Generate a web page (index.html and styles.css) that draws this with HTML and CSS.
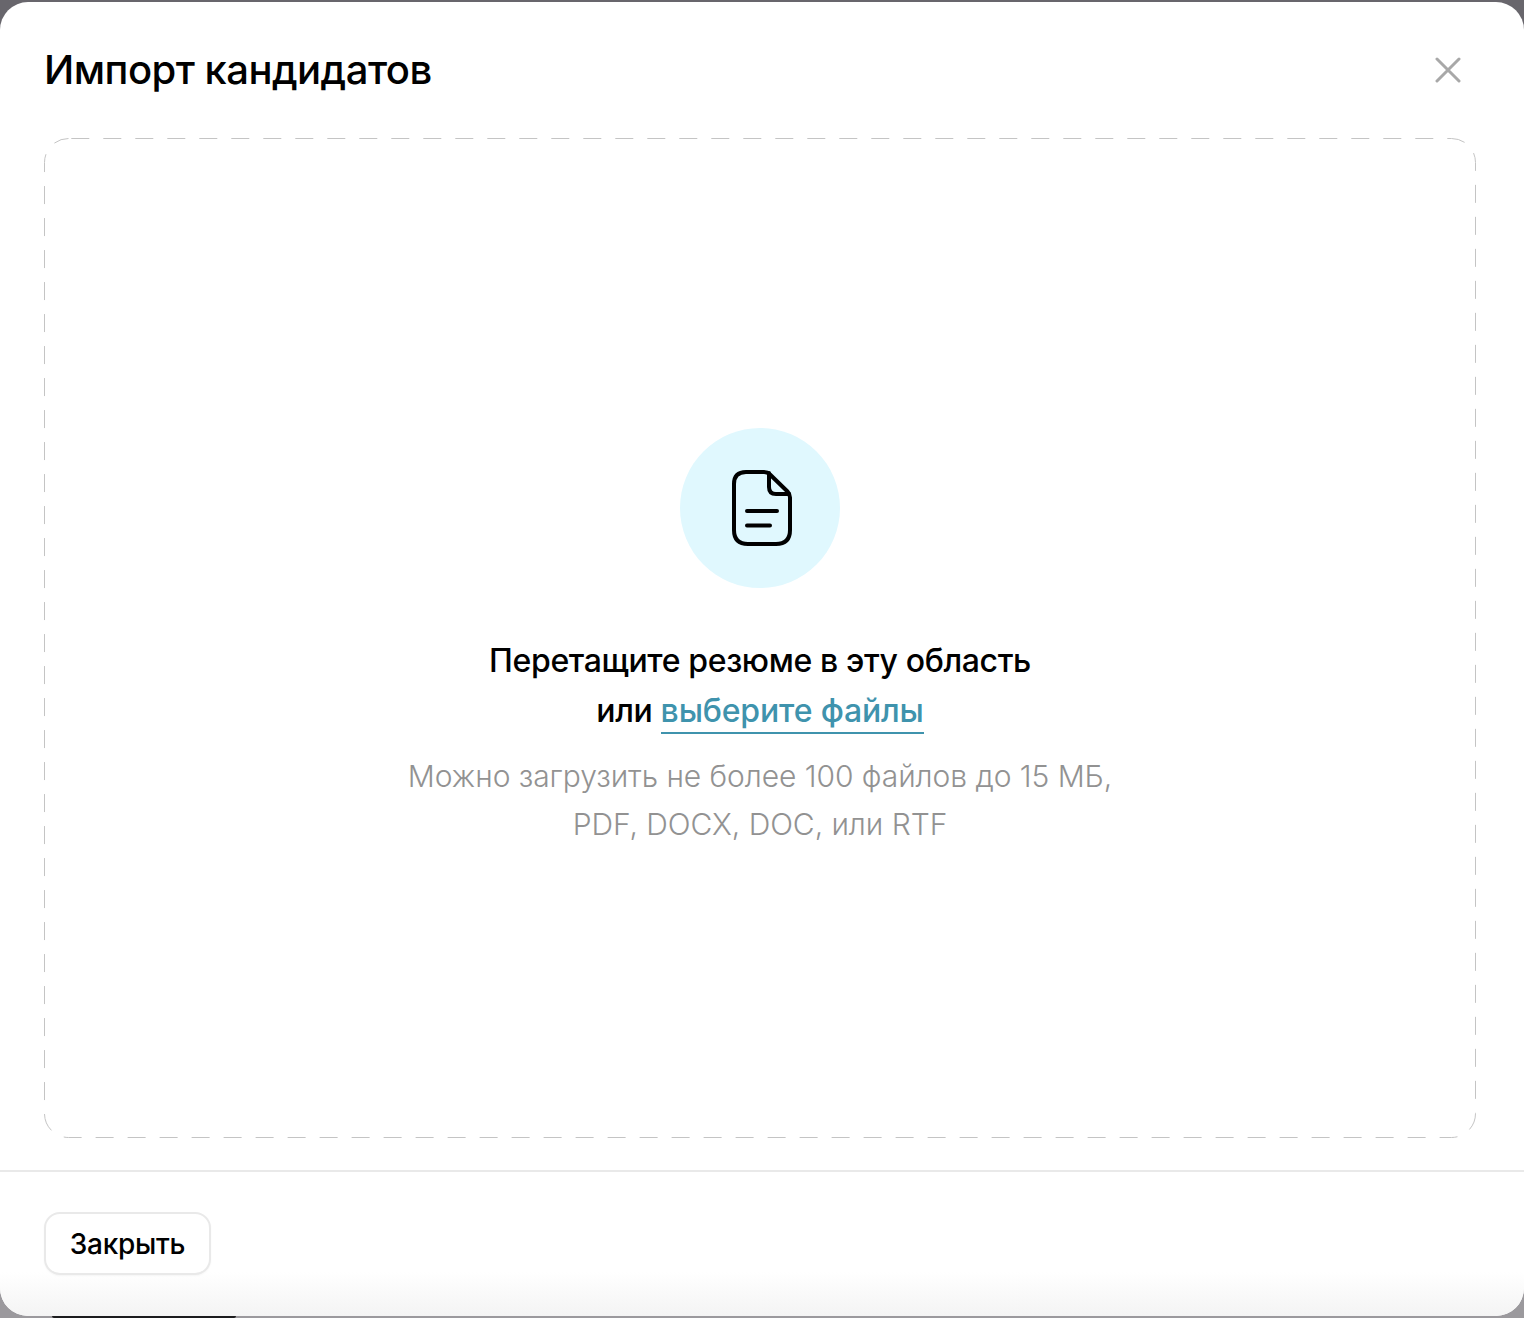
FILE: index.html
```html
<!DOCTYPE html>
<html lang="ru">
<head>
<meta charset="utf-8">
<title>Импорт кандидатов</title>
<link rel="stylesheet" href="styles.css">
</head>
<body>
<div class="modal">
  <header class="modal-head">
    <h1 class="title">Импорт кандидатов</h1>
    <button class="close" aria-label="Закрыть">
      <svg class="close-icon" viewBox="0 0 26 26"><path d="M2 2 24 24M24 2 2 24"/></svg>
    </button>
  </header>
  <section class="drop">
    <svg class="drop-border" width="1432" height="1000" viewBox="0 0 1432 1000"><rect x="0.5" y="0.5" width="1431" height="999" rx="24" ry="24"/></svg>
    <div class="file-circle">
      <svg class="file-icon" viewBox="0 0 60 76"><path d="M14 2H32Q35.500 2 38 4.500L55.500 21.500Q58 24 58 27.500V60Q58 74 44 74H16Q2 74 2 60V14Q2 2 14 2Z"/><path d="M37 3V17Q37 24 44 24H57"/><path d="M15 41H45M15 55.500H38"/></svg>
    </div>
    <p class="lead">Перетащите резюме в эту область<br>или <a class="link" href="#">выберите файлы</a></p>
    <p class="hint">Можно загрузить не более 100 файлов до 15 МБ,<br>PDF, DOCX, DOC, или RTF</p>
  </section>
  <footer class="modal-foot">
    <button class="btn">Закрыть</button>
  </footer>
</div>
<div class="peek"></div>
</body>
</html>
```
FILE: styles.css
```css
* { box-sizing: border-box; }
html, body { margin: 0; padding: 0; }
body {
  width: 1524px;
  height: 1318px;
  overflow: hidden;
  padding-top: 2px;
  background: linear-gradient(180deg, #68666c 0, #68666c 60px, #9b999d 1260px);
  font-family: Inter, "Noto Sans", sans-serif;
  color: #000;
}
.modal {
  height: 1314px;
  border-radius: 28px;
  background: #fff;
  display: flex;
  flex-direction: column;
}
.modal-head {
  display: flex;
  justify-content: space-between;
  align-items: center;
  height: 136px;
  padding: 0 63px 0 44px;
}
.title {
  margin: 0;
  font-size: 40px;
  line-height: 48px;
  font-weight: 500;
  letter-spacing: -0.53px;
}
.close {
  padding: 0;
  border: 0;
  background: none;
  width: 26px;
  height: 26px;
  display: flex;
}
.close-icon { width: 26px; height: 26px; fill: none; stroke: #a8a8a8; stroke-width: 3; stroke-linecap: round; }
.drop {
  position: relative;
  margin: 0 48px 0 44px;
  height: 1000px;
  display: flex;
  flex-direction: column;
  align-items: center;
  padding-top: 290px;
}
.drop-border { position: absolute; left: 0; top: 0; fill: none; stroke: #c4c4c4; stroke-width: 1; stroke-dasharray: 18 14; stroke-dashoffset: -2.8; }
.file-circle {
  width: 160px;
  height: 160px;
  border-radius: 50%;
  background: #e0f8fe;
  display: flex;
  align-items: center;
  justify-content: center;
}
.file-icon { width: 60px; height: 76px; margin-left: 4px; fill: none; stroke: #000; stroke-width: 4; stroke-linecap: round; stroke-linejoin: round; }
.lead {
  margin: 48px 0 0;
  font-size: 32px;
  line-height: 50px;
  font-weight: 500;
  letter-spacing: -0.37px;
  text-align: center;
}
.link {
  color: #3f93ad;
  letter-spacing: -0.17px;
  text-decoration: none;
  padding-bottom: 2px;
  border-bottom: 2px solid #3f93ad;
}
.hint {
  margin: 16px 0 0;
  font-size: 30px;
  line-height: 48px;
  font-weight: 300;
  letter-spacing: -0.06px;
  color: #929292;
  text-align: center;
}
.modal-foot {
  margin-top: 32px;
  flex: 1;
  border-top: 2px solid #e9e9e9;
  padding: 40px 0 0 44px;
  border-radius: 0 0 28px 28px;
  background: linear-gradient(180deg, #fff 0, #fff 100px, #f4f4f4 100%);
}
.btn {
  width: 167px;
  height: 63px;
  border: 2px solid #e9e9e9;
  border-radius: 16px;
  background: #fff;
  box-shadow: 0 1px 2px rgba(0, 0, 0, 0.04);
  font-family: inherit;
  font-size: 28px;
  font-weight: 450;
  letter-spacing: -0.28px;
  color: #000;
}
.peek {
  width: 184px;
  height: 2px;
  margin-left: 52px;
  background: #1c1c1e;
  border-radius: 0 0 8px 8px;
}
```
